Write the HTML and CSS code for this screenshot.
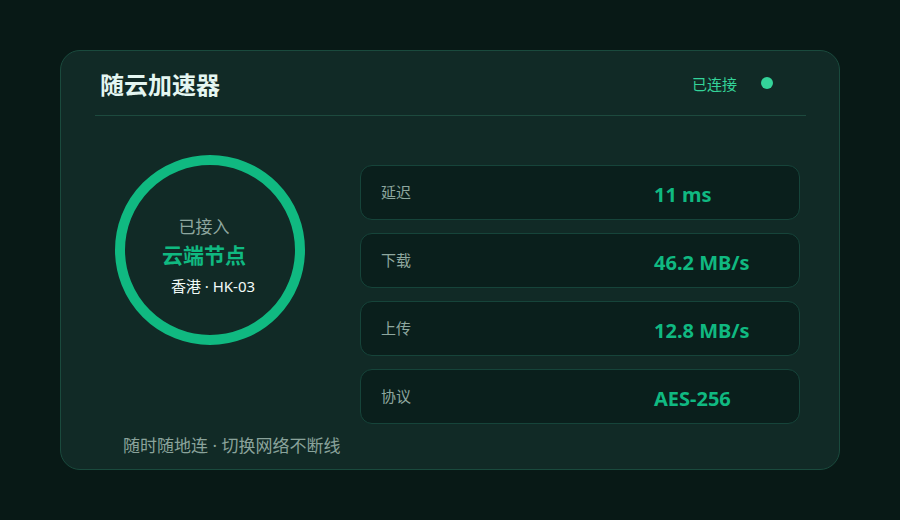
FILE: index.html
```html
<!DOCTYPE html>
<html lang="zh-CN">
  <head>
    <meta charset="UTF-8" />
    <meta name="viewport" content="width=device-width, initial-scale=1.0" />
    <title>随云加速器</title>
    <link rel="stylesheet" href="styles.css">
  </head>
  <body>
    <div class="card">
      <div class="header">
        <h1>随云加速器</h1>
        <div class="status">
          <span>已连接</span>
          <span class="dot"></span>
        </div>
      </div>

      <div class="main">
        <div class="ring-box">
          <div class="ring">
            <div class="ring-sub">已接入</div>
            <div class="ring-title">云端节点</div>
            <div class="ring-node">香港 · HK-03</div>
          </div>
        </div>

        <div class="stats">
          <div class="stat">
            <span class="label">延迟</span>
            <span class="value">11 ms</span>
          </div>
          <div class="stat">
            <span class="label">下载</span>
            <span class="value">46.2 MB/s</span>
          </div>
          <div class="stat">
            <span class="label">上传</span>
            <span class="value">12.8 MB/s</span>
          </div>
          <div class="stat">
            <span class="label">协议</span>
            <span class="value">AES-256</span>
          </div>
        </div>
      </div>

      <div class="footer">随时随地连 · 切换网络不断线</div>
    </div>
  </body>
</html>
```

FILE: styles.css
```css
body {
  margin: 0;
  height: 520px;
  background: #081916;
  font-family: "Noto Sans", "Noto Sans CJK SC", sans-serif;
  padding: 50px 60px 0;
  box-sizing: border-box;
}

.card {
  width: 780px;
  height: 420px;
  box-sizing: border-box;
  background: #112a26;
  border: 1px solid #1a4a3d;
  border-radius: 20px;
  display: flex;
  flex-direction: column;
}

.header {
  display: flex;
  justify-content: space-between;
  align-items: center;
  height: 64px;
  margin: 0 33px 0 34px;
  padding: 0 33px 0 5px;
  border-bottom: 1px solid #1d4a3e;
}

h1 {
  margin: 0;
  font-size: 24px;
  font-weight: 700;
  color: #e4f6f1;
}

.status {
  display: flex;
  align-items: center;
  gap: 24px;
  color: #34d399;
  font-size: 15px;
}

.dot {
  width: 12px;
  height: 12px;
  border-radius: 50%;
  background: #34d399;
}

.main {
  display: flex;
  gap: 25px;
  padding: 49px 39px 0 24px;
}

.ring-box {
  width: 250px;
  display: flex;
  justify-content: center;
}

.ring {
  width: 190px;
  height: 190px;
  box-sizing: border-box;
  border: 10px solid #10b981;
  border-radius: 50%;
  margin-top: -10px;
  display: flex;
  flex-direction: column;
  align-items: center;
  justify-content: center;
  padding: 12px 12px 0 0;
}

.ring-sub {
  font-size: 17px;
  color: #8ea79f;
  line-height: 24px;
}

.ring-title {
  font-size: 21px;
  font-weight: 700;
  color: #10b981;
  line-height: 32px;
}

.ring-node {
  font-size: 15px;
  color: #f1fbf8;
  line-height: 24px;
  margin-top: 3px;
  padding-left: 18px;
}

.stats {
  flex: 1;
  display: flex;
  flex-direction: column;
  gap: 13px;
}

.stat {
  height: 55px;
  box-sizing: border-box;
  display: grid;
  grid-template-columns: 273px 1fr;
  align-items: center;
  padding: 0 20px;
  background: #0a1f1c;
  border: 1px solid #16443a;
  border-radius: 12px;
}

.label {
  font-size: 15px;
  color: #8ea79f;
  margin-top: -2px;
}

.value {
  font-size: 20px;
  font-weight: 700;
  color: #10b981;
  margin-top: 3px;
}

.footer {
  padding: 10px 0 0 62px;
  font-size: 17px;
  line-height: 24px;
  color: #8aa39b;
}
```
